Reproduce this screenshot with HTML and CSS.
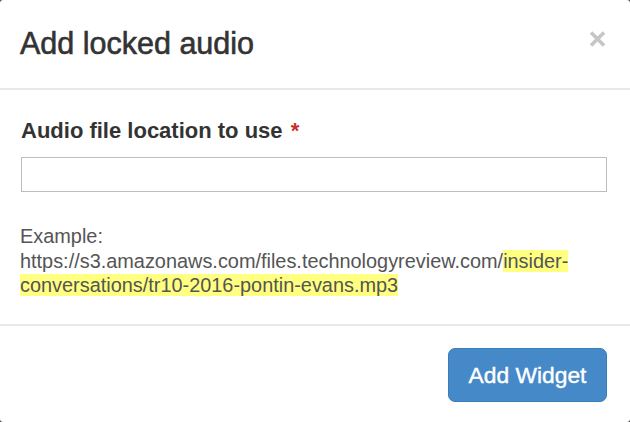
FILE: index.html
```html
<!DOCTYPE html>
<html lang="en">
<head>
<meta charset="utf-8">
<title>Add locked audio</title>
<link rel="stylesheet" href="styles.css">
</head>
<body>
<div class="modal">
  <div class="modal-header">
    <h3 class="modal-title">Add locked audio</h3>
    <button class="close" type="button" aria-label="Close">
      <svg width="17" height="16" viewBox="0 0 17 16"><path d="M2 1.5 L15 14.5 M15 1.5 L2 14.5" stroke="#c6c6c6" stroke-width="3.6" stroke-linecap="butt"/></svg>
    </button>
  </div>
  <div class="modal-body">
    <label class="field-label">Audio file location to use <span class="req">*</span></label>
    <input class="field-input" type="text">
    <p class="help">Example:<br>https://s3.amazonaws.com/files.technologyreview.com/<mark class="hl">insider-<br>conversations/tr10-2016-pontin-evans.mp3</mark></p>
  </div>
  <div class="modal-footer">
    <button class="btn-primary" type="button">Add Widget</button>
  </div>
</div>
</body>
</html>
```
FILE: styles.css
```css
*, *::before, *::after {
  box-sizing: border-box;
}
html, body {
  margin: 0;
  padding: 0;
}
body {
  background: #3a3a3a;
  font-family: "Liberation Sans", Arial, sans-serif;
  color: #333;
}
.modal {
  width: 630px;
  height: 422px;
  background: #fff;
  border-radius: 3px;
  display: flex;
  flex-direction: column;
}
.modal-header {
  display: flex;
  justify-content: space-between;
  align-items: flex-start;
  padding: 27px 24px 0 20px;
  height: 90px;
  border-bottom: 2px solid #e8e8e8;
  flex: none;
}
.modal-title {
  margin: 0;
  font-size: 30.5px;
  line-height: 33px;
  font-weight: normal;
  color: #333;
  -webkit-text-stroke: 0.6px #333;
}
.close {
  margin: 4px 0 0;
  padding: 0;
  border: 0;
  background: none;
  line-height: 0;
  cursor: pointer;
}
.modal-body {
  padding: 26px 23px 0 21px;
  height: 236px;
  border-bottom: 2px solid #e8e8e8;
  display: flex;
  flex-direction: column;
  align-items: stretch;
  flex: none;
}
.field-label {
  font-size: 22px;
  line-height: 30px;
  font-weight: bold;
  color: #333;
}
.req {
  color: #c9302c;
  margin-left: 2px;
}
.field-input {
  margin: 11px 0 0;
  height: 35px;
  border: 1px solid #bdbdbd;
  border-radius: 0;
  padding: 0 10px;
  font: inherit;
}
.help {
  margin: 32px 0 0 -1px;
  font-size: 19.9px;
  line-height: 24.5px;
  color: #555;
}
.hl {
  background: #ffff80;
  color: #555;
}
.modal-footer {
  flex: 1;
  display: flex;
  justify-content: flex-end;
  align-items: flex-start;
  padding: 22px 23px 0 21px;
}
.btn-primary {
  height: 54px;
  width: 159px;
  background: #4589c8;
  border: 1px solid #3a7dbb;
  border-radius: 7px;
  color: #fff;
  font-family: "Liberation Sans", Arial, sans-serif;
  font-size: 22.8px;
  -webkit-text-stroke: 0.4px #fff;
  padding: 0;
  cursor: pointer;
}
```
